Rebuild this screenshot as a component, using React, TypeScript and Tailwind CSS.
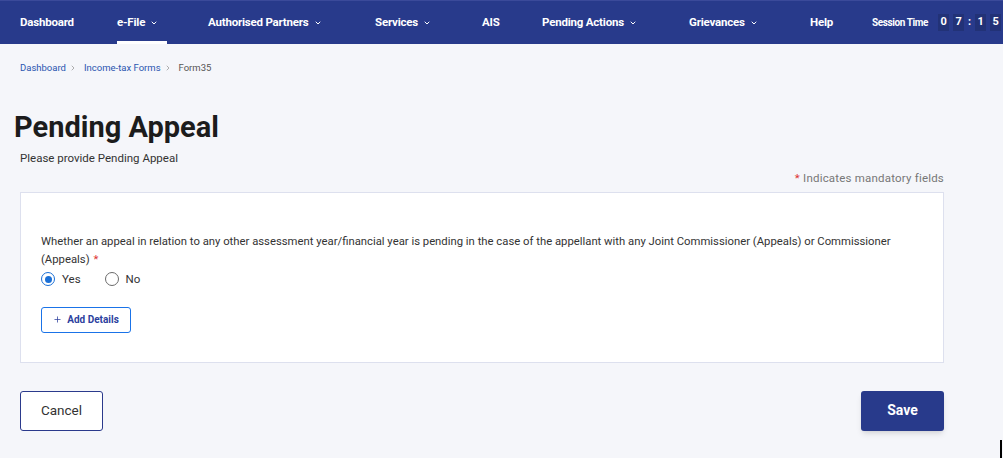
import { ChevronDown, ChevronRight, Plus } from "lucide-react";

const navItems = [
  { label: "Dashboard", w: "w-[97px]", menu: false },
  { label: "e-File", w: "w-[91px]", menu: true, active: true },
  { label: "Authorised Partners", w: "w-[167px]", menu: true },
  { label: "Services", w: "w-[107px]", menu: true },
  { label: "AIS", w: "w-[60px]", menu: false },
  { label: "Pending Actions", w: "w-[147px]", menu: true },
  { label: "Grievances", w: "w-[121px]", menu: true },
  { label: "Help", w: "w-[62px]", menu: false },
];

function NavBar() {
  return (
    <header className="flex h-[44px] items-stretch overflow-hidden border-t border-[#3b4a9a] bg-[#283a8b] pl-[20px] text-white">
      {navItems.map((n) => (
        <div key={n.label} className={`${n.w} relative flex shrink-0 items-center`}>
          <span className="flex items-center gap-[5px] whitespace-nowrap text-[11.5px] font-bold tracking-[-0.2px]">
            {n.label}
            {n.menu && <ChevronDown className="h-[8px] w-[8px]" strokeWidth={3} />}
          </span>
          {n.active && <span className="absolute bottom-0 left-0 h-[3px] w-[50px] bg-white" />}
        </div>
      ))}
      <div className="flex shrink-0 items-center gap-[4px]">
        <span className="mr-[6px] whitespace-nowrap text-[10px] font-bold tracking-[-0.4px]">Session Time</span>
        {["0", "7"].map((d, i) => (
          <span key={i} className="flex h-[17px] w-[11px] items-center justify-center bg-[#223277] text-[11px] font-bold">
            {d}
          </span>
        ))}
        <span className="text-[11px] font-bold">:</span>
        {["1", "5"].map((d, i) => (
          <span key={i} className="flex h-[17px] w-[11px] items-center justify-center bg-[#223277] text-[11px] font-bold">
            {d}
          </span>
        ))}
      </div>
    </header>
  );
}

function Radio({ label, checked }: { label: string; checked?: boolean }) {
  return (
    <label className="flex items-center gap-[7px]">
      <span
        className={`flex h-[14px] w-[14px] items-center justify-center rounded-full border-[1.5px] bg-white ${
          checked ? "border-[#1a6fd6]" : "border-[#6b6b6b]"
        }`}
      >
        {checked && <span className="h-[7px] w-[7px] rounded-full bg-[#1a6fd6]" />}
      </span>
      <span className="text-[11.5px] text-[#333]">{label}</span>
    </label>
  );
}

export default function App() {
  return (
    <div className="relative min-h-[458px] bg-[#f5f6fa] font-['Roboto',sans-serif]">
      <NavBar />
      <main className="w-[944px] pl-[20px]">
        <nav className="mt-[17px] flex items-center gap-[3px] text-[9.5px] text-[#2a55b0]">
          <span>Dashboard</span>
          <ChevronRight className="mr-[4px] h-[8px] w-[8px] text-[#888]" strokeWidth={2} />
          <span>Income-tax Forms</span>
          <ChevronRight className="mr-[4px] h-[8px] w-[8px] text-[#888]" strokeWidth={2} />
          <span className="text-[#555]">Form35</span>
        </nav>

        <h1 className="mt-[35px] -ml-[6px] text-[29px] font-bold leading-[34px] text-[#1c1c1c]">
          Pending Appeal
        </h1>
        <p className="mt-[7px] text-[11.5px] leading-[14px] text-[#333]">Please provide Pending Appeal</p>

        <p className="mt-[5px] text-right text-[11.5px] tracking-[0.2px] text-[#777]">
          <span className="text-[#d33]">*</span> Indicates mandatory fields
        </p>

        <section className="mt-[4px] h-[171px] border border-[#dde0ee] bg-white px-[20px] pt-[40px]">
          <p className="text-[11.3px] leading-[18px] text-[#333]">
            Whether an appeal in relation to any other assessment year/financial year is pending in the case of the
            appellant with any Joint Commissioner (Appeals) or Commissioner (Appeals)
            <span className="ml-[4px] text-[#d33]">*</span>
          </p>
          <div className="mt-[2px] flex gap-[24px]">
            <Radio label="Yes" checked />
            <Radio label="No" />
          </div>
          <button className="mt-[19px] flex h-[26px] w-[90px] items-center justify-center gap-[5px] rounded-[3px] border border-[#1a73e8] bg-white text-[10px] font-bold text-[#2c3f9e]">
            <Plus className="h-[9px] w-[9px]" strokeWidth={2} />
            Add Details
          </button>
        </section>

        <div className="mt-[28px] flex justify-between">
          <button className="h-[40px] w-[83px] rounded-[3px] border-[1.5px] border-[#2b3a8c] bg-white text-[13.5px] text-[#333]">
            Cancel
          </button>
          <button className="h-[40px] w-[83px] rounded-[3px] bg-[#283a8b] text-[14px] font-bold text-white shadow-md">
            Save
          </button>
        </div>
      </main>
      <span className="absolute bottom-0 right-[1px] h-[18px] w-[2px] bg-black" />
    </div>
  );
}
